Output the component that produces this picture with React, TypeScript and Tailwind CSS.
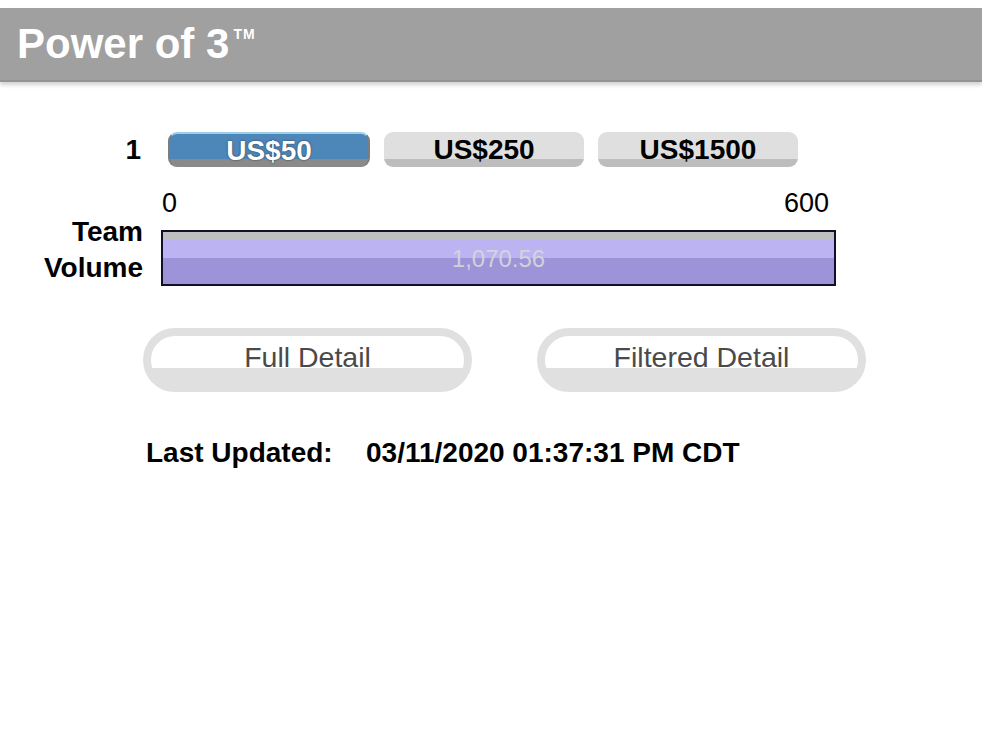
export default function App() {
  const tabs = [
    { label: "US$50", active: true },
    { label: "US$250", active: false },
    { label: "US$1500", active: false },
  ];

  return (
    <div className="min-h-[740px] bg-white font-['Liberation_Sans',Arial,sans-serif] text-black">
      {/* Header */}
      <div className="pt-2">
        <div className="flex h-[74px] items-center border-b-2 border-[#939393] bg-[#a0a0a0] pl-[17px] shadow-[0_3px_4px_rgba(0,0,0,0.18)]">
          <h1 className="flex items-start text-[42px] font-bold leading-none text-white">
            Power of 3
            <span className="ml-[4px] mt-[4px] text-[14px] leading-none tracking-[1px]">TM</span>
          </h1>
        </div>
      </div>

      {/* Amount tabs */}
      <div className="mt-[50px] flex items-center">
        <div className="w-[143px] pr-[2px] text-right text-[28px] font-bold leading-none">1</div>
        <div className="ml-[25px] flex gap-[14px]">
          {tabs.map((t) => (
            <div
              key={t.label}
              className={
                t.active
                  ? "flex h-[35px] w-[202px] items-center justify-center rounded-[9px] border-x-2 border-t-2 border-x-[#7d7d7d] border-t-[#9ccfea] bg-[linear-gradient(to_bottom,#4d87ba_76%,#8a8a8a_76%)] text-[28px] font-bold text-white [text-shadow:0_0_2px_#2a2a2a]"
                  : "flex h-[35px] w-[200px] items-center justify-center rounded-[9px] bg-[linear-gradient(to_bottom,#dfdfdf_78%,#bdbdbd_78%)] text-[28px] font-bold text-black"
              }
            >
              {t.label}
            </div>
          ))}
        </div>
      </div>

      {/* Scale */}
      <div className="mt-[21px] ml-[161px] flex w-[675px] justify-between pr-[7px] text-[27px] leading-[30px]">
        <span className="pl-[1px]">0</span>
        <span>600</span>
      </div>

      {/* Team volume bar */}
      <div className="-mt-[4px] flex items-end">
        <div className="w-[143px] text-right text-[28px] font-bold leading-[36px]">
          <div>Team</div>
          <div>Volume</div>
        </div>
        <div className="ml-[18px] flex h-[56px] w-[675px] flex-col border-2 border-[#10102a]">
          <div className="h-[8px] bg-[#bfbfbf]" />
          <div className="relative flex-1 bg-[linear-gradient(to_bottom,#bcb3f3_40%,#9d93d8_40%)]">
            <span className="absolute inset-x-0 top-[4px] text-center text-[24px] leading-[30px] text-[#d8d8d8] opacity-90">
              1,070.56
            </span>
          </div>
        </div>
      </div>

      {/* Detail buttons */}
      <div className="mt-[42px] ml-[143px] flex gap-[65px]">
        <button className="flex h-[64px] w-[329px] items-center justify-center rounded-[32px] border-[8px] border-[#e0e0e0] bg-[linear-gradient(to_bottom,#ffffff_66%,#e0e0e0_66%)] pb-[6px] text-[28.5px] text-[#4a4a4a]">
          Full Detail
        </button>
        <button className="flex h-[64px] w-[329px] items-center justify-center rounded-[32px] border-[8px] border-[#e0e0e0] bg-[linear-gradient(to_bottom,#ffffff_66%,#e0e0e0_66%)] pb-[6px] text-[28.5px] text-[#4a4a4a]">
          Filtered Detail
        </button>
      </div>

      {/* Last updated */}
      <div className="mt-[45px] ml-[146px] flex text-[28px] font-bold leading-[32px]">
        <span className="w-[220px]">Last Updated:</span>
        <span>03/11/2020 01:37:31 PM CDT</span>
      </div>
    </div>
  );
}
